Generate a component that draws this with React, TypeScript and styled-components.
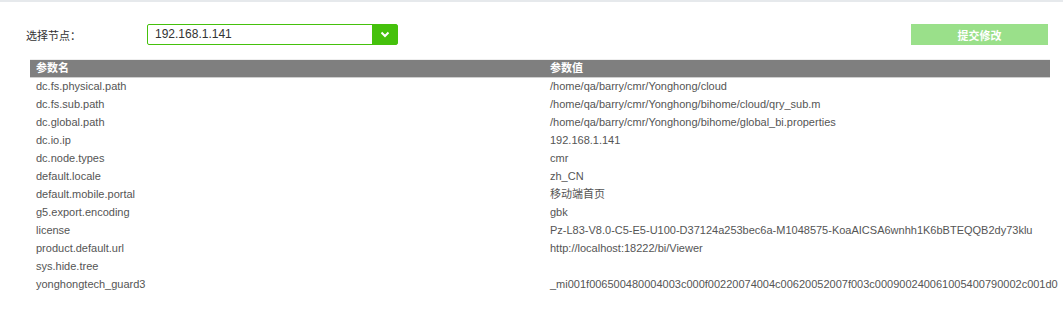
import React from "react";
import styled, { createGlobalStyle } from "styled-components";

const GlobalStyle = createGlobalStyle`
  html, body { margin: 0; padding: 0; background: #fff; }
  body { font-family: "Liberation Sans", Arial, "Noto Sans CJK SC", sans-serif; }
`;

const Page = styled.div`
  width: 1063px;
  height: 321px;
  background: #fff;
  display: flex;
  flex-direction: column;
`;

const TopStrip = styled.div`
  height: 2px;
  background: #e6e9ec;
`;

const Toolbar = styled.div`
  display: flex;
  align-items: center;
  margin-top: 22px;
  padding-left: 26px;
  padding-right: 15px;
  height: 21px;
`;

const Label = styled.span`
  width: 121px;
  font-size: 11px;
  color: #333;
  font-family: "Liberation Sans", "Noto Sans CJK SC", sans-serif;
`;

const Select = styled.div`
  display: flex;
  width: 251px;
  height: 21px;
  box-sizing: border-box;
  border: 1px solid #45c10c;
  border-radius: 2px;
`;

const SelectValue = styled.div`
  flex: 1;
  font-size: 12px;
  color: #333;
  padding-left: 7px;
  line-height: 19px;
`;

const SelectButton = styled.div`
  width: 25px;
  background: #45c10c;
  display: flex;
  align-items: center;
  justify-content: center;
`;

const Spacer = styled.div`
  flex: 1;
`;

const SubmitButton = styled.button`
  width: 137px;
  height: 21px;
  border: none;
  background: #9ae08a;
  color: #fff;
  font-size: 11px;
  font-weight: bold;
  font-family: "Liberation Sans", "Noto Sans CJK SC", sans-serif;
  padding: 0;
`;

const Table = styled.div`
  margin: 14px 13px 0 30px;
  border-top: 1px solid #eeeeee;
  display: flex;
  flex-direction: column;
`;

const HeaderWrap = styled.div`
  border-bottom: 1px solid #cfcfcf;
`;

const Grid = styled.div`
  display: grid;
  grid-template-columns: 513px 1fr;
`;

const HeaderRow = styled(Grid)`
  height: 17px;
  background: #7f7f7f;
`;

const HeaderCell = styled.div<{ $pad: number }>`
  color: #fff;
  font-size: 11px;
  font-weight: bold;
  line-height: 17px;
  padding-left: ${(p) => p.$pad}px;
  font-family: "Liberation Sans", "Noto Sans CJK SC", sans-serif;
`;

const Row = styled(Grid)`
  height: 18px;
`;

const Cell = styled.div<{ $pad: number }>`
  font-size: 11px;
  color: #555;
  line-height: 17px;
  padding-left: ${(p) => p.$pad}px;
  white-space: nowrap;
  font-family: "Liberation Sans", "Noto Sans CJK SC", sans-serif;
`;

const rows: [string, string][] = [
  ["dc.fs.physical.path", "/home/qa/barry/cmr/Yonghong/cloud"],
  ["dc.fs.sub.path", "/home/qa/barry/cmr/Yonghong/bihome/cloud/qry_sub.m"],
  ["dc.global.path", "/home/qa/barry/cmr/Yonghong/bihome/global_bi.properties"],
  ["dc.io.ip", "192.168.1.141"],
  ["dc.node.types", "cmr"],
  ["default.locale", "zh_CN"],
  ["default.mobile.portal", "移动端首页"],
  ["g5.export.encoding", "gbk"],
  ["license", "Pz-L83-V8.0-C5-E5-U100-D37124a253bec6a-M1048575-KoaAICSA6wnhh1K6bBTEQQB2dy73klu"],
  ["product.default.url", "http://localhost:18222/bi/Viewer"],
  ["sys.hide.tree", ""],
  ["yonghongtech_guard3", "_mi001f006500480004003c000f00220074004c00620052007f003c000900240061005400790002c001d0"],
];

export default function App() {
  return (
    <Page>
      <GlobalStyle />
      <TopStrip />
      <Toolbar>
        <Label>选择节点：</Label>
        <Select>
          <SelectValue>192.168.1.141</SelectValue>
          <SelectButton>
            <svg width="10" height="7" viewBox="0 0 10 7">
              <path d="M1.5 1.5 L5 5 L8.5 1.5" fill="none" stroke="#fff" strokeWidth="2" />
            </svg>
          </SelectButton>
        </Select>
        <Spacer />
        <SubmitButton>提交修改</SubmitButton>
      </Toolbar>
      <Table>
        <HeaderWrap>
          <HeaderRow>
            <HeaderCell $pad={6}>参数名</HeaderCell>
            <HeaderCell $pad={7}>参数值</HeaderCell>
          </HeaderRow>
        </HeaderWrap>
        {rows.map(([k, v]) => (
          <Row key={k}>
            <Cell $pad={6}>{k}</Cell>
            <Cell $pad={7}>{v}</Cell>
          </Row>
        ))}
      </Table>
    </Page>
  );
}
